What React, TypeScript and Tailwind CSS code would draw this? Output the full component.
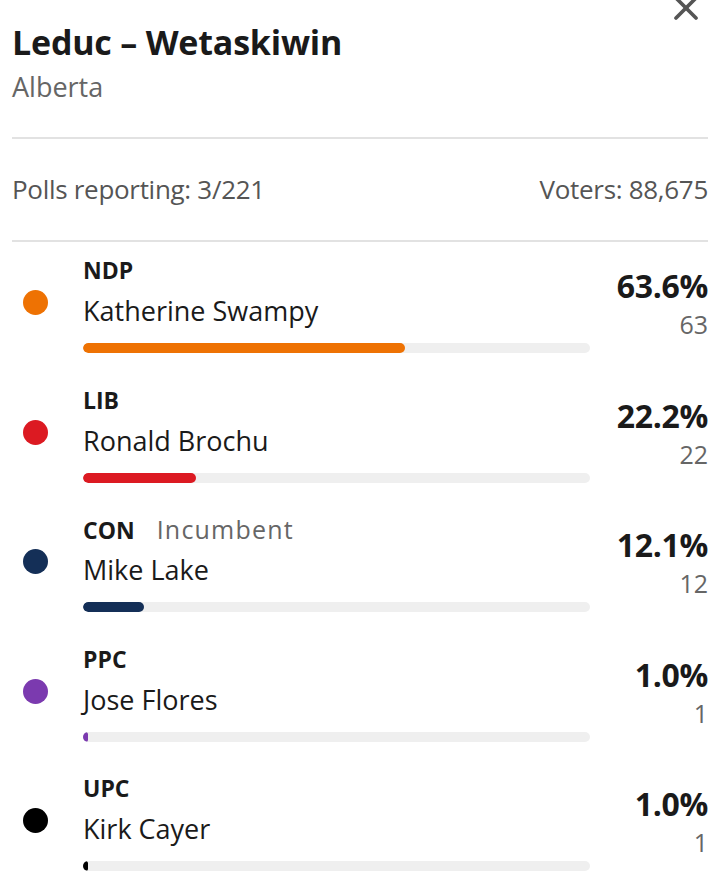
import { X } from "lucide-react"

const CANDIDATES = [
  { party: "NDP", name: "Katherine Swampy", pct: 63.6, votes: 63, color: "bg-[#ee7203]" },
  { party: "LIB", name: "Ronald Brochu", pct: 22.2, votes: 22, color: "bg-[#dc1a22]" },
  { party: "CON", name: "Mike Lake", pct: 12.1, votes: 12, color: "bg-[#142f57]", incumbent: true },
  { party: "PPC", name: "Jose Flores", pct: 1.0, votes: 1, color: "bg-[#7b3aaf]" },
  { party: "UPC", name: "Kirk Cayer", pct: 1.0, votes: 1, color: "bg-black" },
]

export default function App() {
  return (
    <div
      className="relative w-[720px] h-[890px] overflow-hidden bg-white px-3 text-[#1a1a1a]"
      style={{ fontFamily: '"Open Sans", "Noto Sans", sans-serif' }}
    >
      <button className="absolute right-[14px] top-[-12px] text-[#555]">
        <X size={40} strokeWidth={2.2} />
      </button>

      {/* Header */}
      <div className="pt-[20px] pb-[34px] border-b-2 border-[#e2e2e2]">
        <h1 className="text-[34px] leading-[44px] font-bold tracking-[-0.2px]">Leduc – Wetaskiwin</h1>
        <p className="mt-[7px] text-[27px] leading-[32px] text-[#666]">Alberta</p>
      </div>

      {/* Stats */}
      <div className="flex justify-between items-center h-[103px] border-b-2 border-[#e2e2e2] text-[26px] text-[#555] tracking-[-0.3px]">
        <span>Polls reporting: 3/221</span>
        <span>Voters: 88,675</span>
      </div>

      {/* Candidates */}
      <div className="flex flex-col pt-[13px]">
        {CANDIDATES.map((c) => (
          <div key={c.party} className="flex h-[129.5px]">
            <div className="w-[71px] flex items-start pt-[35px] pl-[11px]">
              <span className={`block w-[25px] h-[25px] rounded-full ${c.color}`} />
            </div>
            <div className="w-[507px] flex flex-col">
              <div className="flex items-baseline gap-[22px] h-[30px]">
                <span className="text-[23px] leading-[30px] font-bold">{c.party}</span>
                {c.incumbent && (
                  <span className="text-[25px] leading-[30px] text-[#666] tracking-[1.2px]">Incumbent</span>
                )}
              </div>
              <span className="mt-[7px] text-[27px] leading-[38px]">{c.name}</span>
              <div className="mt-[13px] h-[10px] rounded-full bg-[#efefef] overflow-hidden">
                <div
                  className={`h-full rounded-full ${c.color}`}
                  style={{ width: `max(5px, ${c.pct}%)` }}
                />
              </div>
            </div>
            <div className="flex-1 flex flex-col items-end pt-[12px]">
              <span className="text-[32px] leading-[38px] font-bold tracking-[-0.3px]">{c.pct.toFixed(1)}%</span>
              <span className="mt-[4px] text-[25px] leading-[30px] text-[#666]">{c.votes}</span>
            </div>
          </div>
        ))}
      </div>
    </div>
  )
}
